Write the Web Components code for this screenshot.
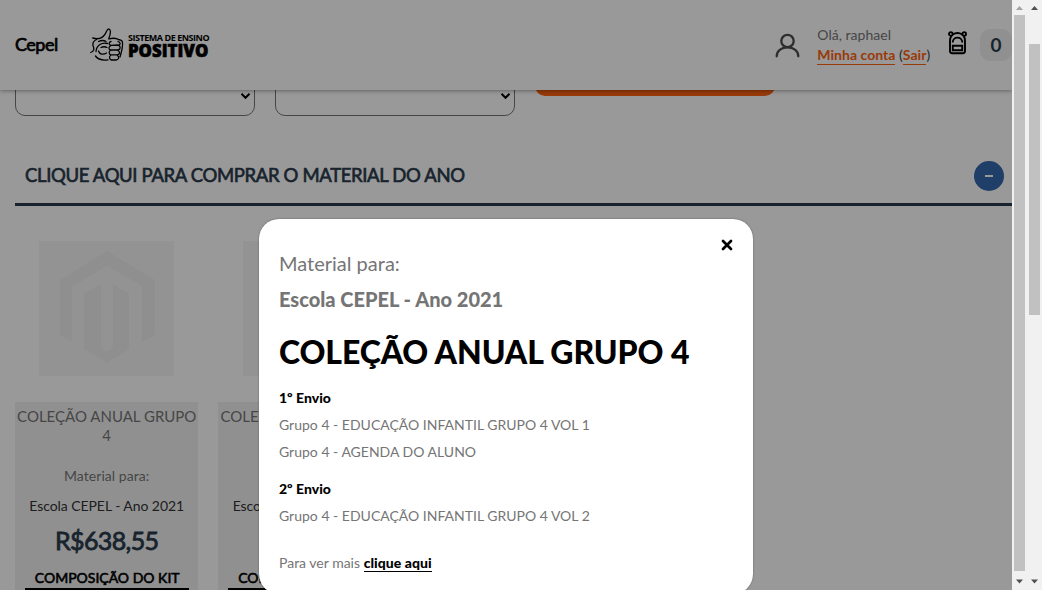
<!DOCTYPE html>
<html lang="pt-BR">
<head>
<meta charset="utf-8">
<title>Cepel</title>
<style>
html,body{margin:0;height:100%;overflow:hidden}
body{display:flex;font-family:Lato,"Open Sans",sans-serif;background:#fff}
</style>
</head>
<body>
<store-page></store-page>
<scroll-track style="--top:15px;--len:556px;--up:#a3a3a3"></scroll-track>
<scroll-track style="--top:44px;--len:271px;--up:#505050"></scroll-track>
<script>
const define=(name,html)=>customElements.define(name,class extends HTMLElement{
  constructor(){super();this.attachShadow({mode:'open'}).innerHTML=html;}
});

define('scroll-track',`<style>
:host{display:flex;flex-direction:column;width:15px;height:590px;background:#f1f1f1;box-sizing:border-box;flex:none}
.thumb{margin:calc(var(--top) - 15px) 2px 0;height:var(--len);background:#c1c1c1;flex:none}
svg{flex:none;display:block}.down{margin-top:auto}
</style>
<svg width="15" height="15"><path d="M4 10h7L7.500 6z" fill="var(--up)"/></svg>
<div class="thumb"></div>
<svg class="down" width="15" height="15"><path d="M4 4.500h7L7.500 8.500z" fill="#505050"/></svg>`);

define('brand-logo',`<style>
:host{display:flex;align-items:center;width:120px;height:34px;color:#000}
.words{margin-left:4px;width:82px;white-space:nowrap}
.a{font:700 9px/12px "Open Sans",sans-serif;letter-spacing:-.46px;height:11px}
.b{font:800 16.800px/15px "Open Sans",sans-serif;letter-spacing:0;-webkit-text-stroke:.6px #000}
svg{flex:none}
</style>
<svg width="34" height="34" viewBox="0 0 34 34" fill="none" stroke="#000" stroke-width="1.300" stroke-linecap="round" stroke-linejoin="round">
<path d="M2.700 10C8 11.500 12 10 14 7.500 17 4.500 16.500.8 18.700.8 21.500 1.500 20.500 6 18.700 11 22 10 25 10 27.700 11M6.700 11.500C4 12.500 2.500 14.500 3 17.500 4.500 21 4 23.500.8 24.500M6 23.500C6.500 17 12 14 17.500 15.500M8.500 13.500Q13 11.500 16 13.500M8.500 23C9.500 26.500 13.500 27 16.500 25M11 19.500Q14 18 17 19.500M5.500 28C8 31.500 13 32.500 18 31.800"/>
<path d="M28 11.500Q32.500 12 32.500 14.500C33 19 31.500 24 30 29M21 13.500C18.500 14 18.500 17 21 17.300l7-.3M20.500 18c-2 .8-2 3.800.2 4h7M28 13.700c2.500.3 3 3 .3 3.600 2.500.7 2.500 4-.3 4.700M20.500 22.500c-2 .8-1.500 3.800.2 4.300h6.500c3-.3 3-3.500.6-4.300M20.500 27.500c-1.700.8-1 4.200.8 4.500h4.700c3-.3 3.500-3 1.500-4.500"/>
</svg>
<div class="words"><div class="a">SISTEMA DE ENSINO</div><div class="b">POSITIVO</div></div>`);

define('account-box',`<style>
:host{display:flex;align-items:center}
.t{margin-left:17.300px;width:130.700px;font-size:14px;letter-spacing:.03px;line-height:20px;color:#757575;white-space:nowrap}
a{color:#ff6210;font-weight:700;border-bottom:1px solid #ff6210;display:inline-block;line-height:19px;height:19px}
.p{color:#3c4650}
.n{box-sizing:border-box;width:32px;height:32px;margin-left:13px;border-radius:10px;background:#f1f1f1;color:#2b3b4b;font:700 19px/32px Lato,sans-serif;text-align:center}
svg{flex:none;display:block}
.bag{margin-bottom:5px}
</style>
<svg width="25" height="25" viewBox="0 0 25 25" fill="none" stroke="#4c4c4c" stroke-width="2.300" stroke-linecap="round"><circle cx="12.500" cy="8" r="6.200"/><path d="M1.700 23.300c0-11.800 21.600-11.800 21.600 0"/></svg>
<div class="t">Olá, raphael<br><a>Minha conta</a> <span class="p">(</span><a>Sair</a><span class="p">)</span></div>
<svg class="bag" width="19" height="24" viewBox="0 0 19 24" fill="none" stroke="#000" stroke-width="1.900"><circle cx="2.800" cy="2.900" r="1.800"/><circle cx="16.200" cy="2.900" r="1.800"/><path d="M4.600 3.500Q9.500.5 14.400 3.500M3.500 4.800Q2 6.500 2 10v10q0 2.200 2.200 2.200h10.600q2.200 0 2.200-2.200v-10q0-3.500-1.500-5.200M4.700 11.500c0-6.500 9.600-6.500 9.600 0M4.800 14.700h9.400v4.600H4.800z"/></svg>
<div class="n">0</div>`);

define('store-header',`<style>
:host{position:absolute;inset:0 0 auto 0;height:90px;display:flex;align-items:center;background:#fff;box-shadow:0 0 5px rgba(0,0,0,.5);box-sizing:border-box;padding-left:15px}
.c{width:75px;font-size:18px;letter-spacing:-.5px;-webkit-text-stroke:.7px #000;line-height:22px;margin-bottom:3px}
account-box{margin-left:auto}
</style><div class="c">Cepel</div><brand-logo></brand-logo><account-box></account-box>`);

define('select-box',`<style>
:host{display:flex;box-sizing:border-box;width:240px;height:40px;border:1px solid #767676;border-radius:10px;align-items:center;justify-content:flex-end;padding-right:3px}
</style><svg width="11" height="8" viewBox="0 0 11 8" fill="none" stroke="#000" stroke-width="2"><path d="M1.500 1.800L5.500 5.800l4-4"/></svg>`);

define('product-card',`<style>
:host{display:block;width:183.400px;text-align:center;flex:none}
.ph{width:135px;height:135px;margin:0 auto 26px;background:#f6f6f6;display:block}
.b{background:#f1f1f1;height:210px;padding-top:5px;box-sizing:border-box;color:#757575}
.n{font-size:15px;line-height:19px;height:40px;white-space:nowrap}
.m{font-size:14px;line-height:20px;margin-top:19px;letter-spacing:.06px}
.e{font-size:14px;line-height:20px;margin-top:10px;color:#333;letter-spacing:-.06px}
.p{font-size:25px;line-height:30px;margin-top:9px;color:#2b3b4b;letter-spacing:-.6px;-webkit-text-stroke:.8px #2b3b4b}
.k{font-size:14px;line-height:22px;height:21px;margin:12px 9px 0 10px;color:#000;border-bottom:3px solid #000;-webkit-text-stroke:.6px #000;white-space:nowrap}
</style>
<svg class="ph" viewBox="0 0 135 135"><g fill="#efefef"><path d="M68 10L116 39V94L103 101V45L68 25L33 46V101L21 94V39z"/><path d="M45 53L62 43V105Q68 115 74 105V43L90 53V108L68 122L45 108z"/></g></svg>
<div class="b"><div class="n">COLEÇÃO ANUAL GRUPO<br>4</div><div class="m">Material para:</div><div class="e">Escola CEPEL - Ano 2021</div><div class="p">R$638,55</div><div class="k">COMPOSIÇÃO DO KIT</div></div>`);

define('kit-dialog',`<style>
:host{position:absolute;left:259px;top:219px;width:494px;height:375px;box-sizing:border-box;background:#fff;border-radius:20px;padding:31px 20px 0;color:#757575;box-shadow:0 0 2px rgba(0,0,0,.4)}
.x{position:absolute;right:20px;top:20px;display:block}
.m{font-size:20px;line-height:26px}
.e{font-size:20px;line-height:26px;font-weight:900;margin-top:10px}
h2{margin:20px 0 0;font:900 32px/40px Lato,sans-serif;letter-spacing:-.1px;color:#000;white-space:nowrap}
h3{margin:16px 0 0;font:900 14px/20px Lato,sans-serif;color:#000}
p{margin:7px 0 0;font-size:14px;line-height:20px}
h3.s{margin-top:17px}
p.l{margin-top:27px}
a{display:inline-block;line-height:19px;height:18px;font-weight:900;color:#000;border-bottom:1px solid #000;letter-spacing:.06px}
</style>
<svg class="x" width="12" height="12" viewBox="0 0 12 12" stroke="#000" stroke-width="2.700" stroke-linecap="round"><path d="M2 2l8 8M10 2l-8 8"/></svg>
<div class="m">Material para:</div><div class="e">Escola CEPEL - Ano 2021</div>
<h2>COLEÇÃO ANUAL GRUPO 4</h2>
<h3>1º Envio</h3><p>Grupo 4 - EDUCAÇÃO INFANTIL GRUPO 4 VOL 1</p><p>Grupo 4 - AGENDA DO ALUNO</p>
<h3 class="s">2º Envio</h3><p>Grupo 4 - EDUCAÇÃO INFANTIL GRUPO 4 VOL 2</p>
<p class="l">Para ver mais <a>clique aqui</a></p>`);

define('store-page',`<style>
:host{display:block;position:relative;width:1012px;height:590px;overflow:hidden;flex:none;background:#fff}
.f{display:flex;gap:20px;padding:76px 0 0 15px}
.btn{width:240px;height:40px;margin-top:-20px;border-radius:10px;background:#ff6210}
.t{display:flex;justify-content:space-between;align-items:center;margin:30px 0 0 15px;padding:0 8px 0 10px;height:57px;border-bottom:3px solid #2b3b4b;color:#2b3b4b;font-size:18.500px;letter-spacing:-.35px}
.t span{-webkit-text-stroke:.65px #2b3b4b}
.t i{margin-top:2px;width:30px;height:30px;border-radius:50%;background:#3469ad;display:flex;align-items:center;justify-content:center}
.t i::before{content:"";width:8px;height:2px;background:#fff}
.g{display:flex;gap:20px;padding:35px 0 0 15px}
.shade{position:absolute;inset:0;background:rgba(0,0,0,.4)}
</style>
<div class="f"><select-box></select-box><select-box></select-box><div class="btn"></div></div>
<div class="t"><span>CLIQUE AQUI PARA COMPRAR O MATERIAL DO ANO</span><i></i></div>
<div class="g"><product-card></product-card><product-card></product-card></div>
<store-header></store-header><div class="shade"></div><kit-dialog></kit-dialog>`);
</script>
</body>
</html>
